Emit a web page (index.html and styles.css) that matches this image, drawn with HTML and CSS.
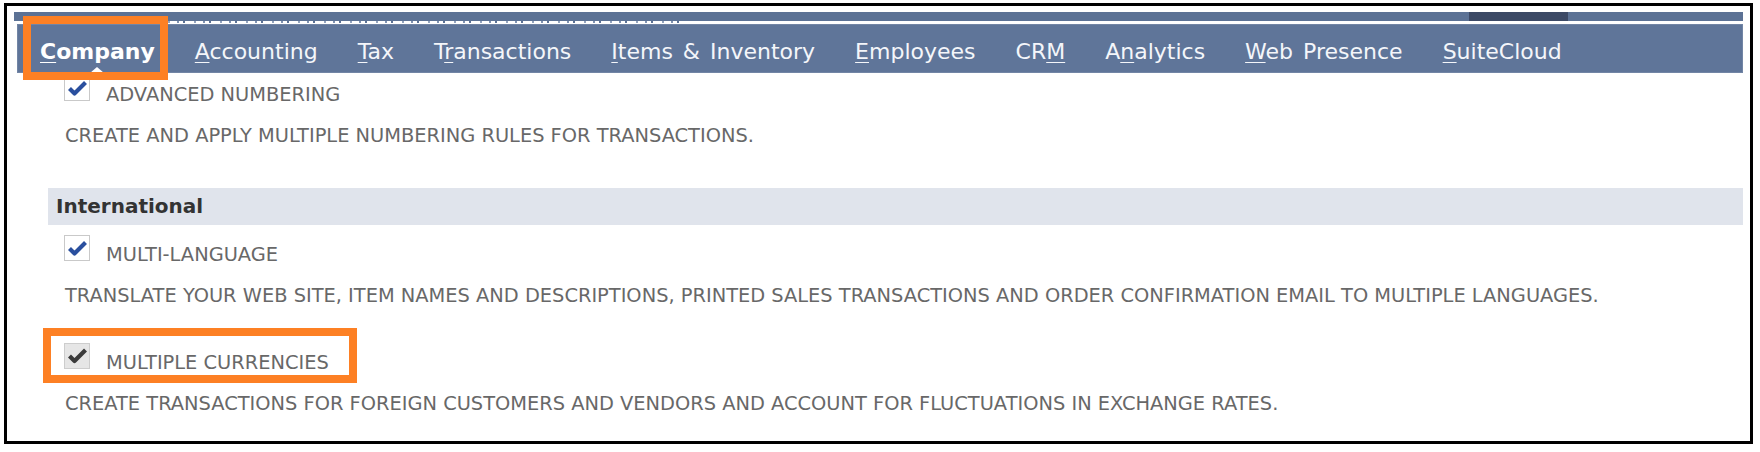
FILE: index.html
```html
<!DOCTYPE html>
<html lang="en">
<head>
<meta charset="utf-8">
<title>Enable Features - Company</title>
<link rel="stylesheet" href="styles.css">
</head>
<body>
<div class="frame">
  <header class="topnav">
    <div class="strip"><span class="strip-tab"></span></div>
    <div class="strip-edge"><span class="cut-text"></span></div>
    <nav class="menubar">
      <a class="menu-item active"><u>C</u>ompany<span class="highlight highlight-tab"></span></a>
      <a class="menu-item"><u>A</u>ccounting</a>
      <a class="menu-item"><u>T</u>ax</a>
      <a class="menu-item">T<u>r</u>ansactions</a>
      <a class="menu-item"><u>I</u>tems &amp; Inventory</a>
      <a class="menu-item"><u>E</u>mployees</a>
      <a class="menu-item">CR<u>M</u></a>
      <a class="menu-item">A<u>n</u>alytics</a>
      <a class="menu-item"><u>W</u>eb Presence</a>
      <a class="menu-item"><u>S</u>uiteCloud</a>
    </nav>
  </header>

  <main class="content">
    <section class="feature feature-first">
      <div class="feature-row">
        <svg class="checkbox" viewBox="0 0 26 26"><rect x="0.5" y="0.5" width="25" height="25" fill="#fff" stroke="#c9c9c9"/><path d="M5.5 13.5 L10.5 18.5 L21.5 7.5" fill="none" stroke="#2a4f9e" stroke-width="4.2" stroke-linejoin="round"/></svg>
        <span class="feature-label">ADVANCED NUMBERING</span>
      </div>
      <p class="feature-desc">CREATE AND APPLY MULTIPLE NUMBERING RULES FOR TRANSACTIONS.</p>
    </section>

    <h3 class="group-title">International</h3>

    <section class="feature feature-ml">
      <div class="feature-row">
        <svg class="checkbox" viewBox="0 0 26 26"><rect x="0.5" y="0.5" width="25" height="25" fill="#fff" stroke="#c9c9c9"/><path d="M5.5 13.5 L10.5 18.5 L21.5 7.5" fill="none" stroke="#2a4f9e" stroke-width="4.2" stroke-linejoin="round"/></svg>
        <span class="feature-label">MULTI-LANGUAGE</span>
      </div>
      <p class="feature-desc">TRANSLATE YOUR WEB SITE, ITEM NAMES AND DESCRIPTIONS, PRINTED SALES TRANSACTIONS AND ORDER CONFIRMATION EMAIL TO MULTIPLE LANGUAGES.</p>
    </section>

    <section class="feature feature-mc">
      <span class="highlight highlight-row"></span>
      <div class="feature-row">
        <svg class="checkbox" viewBox="0 0 26 26"><rect x="0.5" y="0.5" width="25" height="25" fill="#e6e6e6" stroke="#cdcdcd"/><path d="M5.5 13 L10.5 18 L21.5 7" fill="none" stroke="#3b3b3b" stroke-width="4.2" stroke-linejoin="round"/></svg>
        <span class="feature-label">MULTIPLE CURRENCIES</span>
      </div>
      <p class="feature-desc">CREATE TRANSACTIONS FOR FOREIGN CUSTOMERS AND VENDORS AND ACCOUNT FOR FLUCTUATIONS IN EXCHANGE RATES.</p>
    </section>
  </main>
</div>
</body>
</html>
```

FILE: styles.css
```css
* {
  box-sizing: border-box;
}

body {
  margin: 0;
  background: #ffffff;
  font-family: "DejaVu Sans", Verdana, sans-serif;
}

.frame {
  margin: 3px 0 0 4px;
  width: 1749px;
  height: 441px;
  border: 3px solid #000000;
  background: #ffffff;
  overflow: hidden;
}

/* ---------- top navigation ---------- */
.topnav {
  position: relative;
  z-index: 1;
  padding: 6px 7px 0 7px;
}

.strip {
  height: 9px;
  background: #5c7295;
  display: flex;
}

.strip-tab {
  margin-left: 1455px;
  width: 99px;
  background: #3c4965;
}

.strip-edge {
  height: 3px;
  display: flex;
}

.cut-text {
  margin-left: 26px;
  width: 642px;
  height: 2px;
  background: repeating-linear-gradient(90deg,
    #ffffff 0 7px, #7f92b1 7px 9px,
    #ffffff 9px 13px, #5c7295 13px 15px,
    #ffffff 15px 24px, #93a3bd 24px 26px);
}

.menubar {
  margin-left: 3px;
  height: 49px;
  padding: 7px 0 0 23px;
  background: #5f7599;
  box-shadow: inset 0 0 0 1px rgba(255, 255, 255, 0.12);
  display: flex;
  align-items: center;
  gap: 40px;
  font-size: 22px;
  word-spacing: 3px;
  color: #ffffff;
}

.menu-item {
  position: relative;
  line-height: 24px;
  color: #f4f6fa;
  text-decoration: none;
  white-space: nowrap;
}

.menu-item u {
  text-decoration-thickness: 1px;
  text-underline-offset: 3px;
}

.menu-item.active {
  font-weight: bold;
  word-spacing: 0;
  color: #ffffff;
}

.menu-item.active::after {
  content: "";
  position: absolute;
  left: 50%;
  bottom: -9px;
  transform: translateX(-50%);
  border-left: 7px solid transparent;
  border-right: 7px solid transparent;
  border-bottom: 6px solid #ffffff;
}

/* orange annotation boxes */
.highlight {
  position: absolute;
  border: 8px solid #fd8024;
  pointer-events: none;
  z-index: 2;
}

.highlight-tab {
  left: -17px;
  top: -24px;
  width: 145px;
  height: 64px;
}

.highlight-row {
  left: -5px;
  top: -15px;
  width: 314px;
  height: 55px;
}

/* ---------- content ---------- */
.content {
  padding: 0 7px 0 41px;
}

.feature {
  position: relative;
  padding-left: 16px;
}

.feature-first {
  margin-top: 2px;
}

.feature-row {
  display: flex;
  align-items: flex-start;
}

.checkbox {
  flex: none;
  width: 26px;
  height: 26px;
  display: block;
}

.feature-label {
  margin: 8px 0 0 16px;
  font-size: 19.4px;
  line-height: 24px;
  color: #686868;
}

.feature-desc {
  margin: 17px 0 0 1px;
  font-size: 19.4px;
  line-height: 24px;
  color: #686868;
  white-space: nowrap;
}

.group-title {
  margin: 40px 0 0 0;
  height: 37px;
  padding-left: 8px;
  background: #e0e4ec;
  font-size: 20px;
  line-height: 37px;
  font-weight: bold;
  color: #333333;
}

.feature-ml {
  margin-top: 10px;
}

.feature-mc {
  margin-top: 35px;
}
```
